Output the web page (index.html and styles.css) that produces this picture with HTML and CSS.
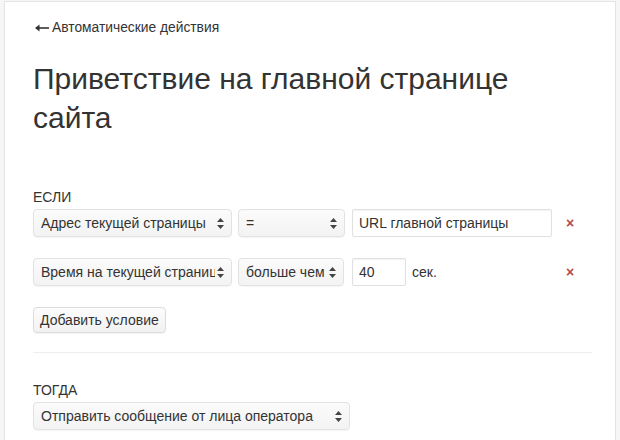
FILE: index.html
```html
<!DOCTYPE html>
<html lang="ru">
<head>
    <meta charset="UTF-8">
    <title>Приветствие на главной странице сайта</title>
    <link rel="stylesheet" href="styles.css">
</head>
<body>
    <div class="panel">
        <a class="back" href="#">
            <svg class="back-arrow" width="14" height="8" viewBox="0 0 14 8"><path d="M1 4H14" stroke="#333" stroke-width="1.6"/><path d="M0 4L4.5 0.5V7.5z" fill="#333"/></svg>
            Автоматические действия
        </a>
        <h1>Приветствие на главной странице сайта</h1>

        <div class="label">ЕСЛИ</div>

        <div class="cond">
            <div class="select-wrap w-field">
                <select><option>Адрес текущей страницы</option></select>
                <svg class="arrows" width="7" height="11" viewBox="0 0 7 11"><path d="M3.5 0L7 4H0z M3.5 11L0 7h7z" fill="#444"/></svg>
            </div>
            <div class="select-wrap w-op">
                <select><option>=</option></select>
                <svg class="arrows" width="7" height="11" viewBox="0 0 7 11"><path d="M3.5 0L7 4H0z M3.5 11L0 7h7z" fill="#444"/></svg>
            </div>
            <input class="text w-value" type="text" value="URL главной страницы">
            <span class="remove">&times;</span>
        </div>

        <div class="cond">
            <div class="select-wrap w-field">
                <select><option>Время на текущей странице</option></select>
                <svg class="arrows" width="7" height="11" viewBox="0 0 7 11"><path d="M3.5 0L7 4H0z M3.5 11L0 7h7z" fill="#444"/></svg>
            </div>
            <div class="select-wrap w-op2">
                <select><option>больше чем</option></select>
                <svg class="arrows" width="7" height="11" viewBox="0 0 7 11"><path d="M3.5 0L7 4H0z M3.5 11L0 7h7z" fill="#444"/></svg>
            </div>
            <input class="text w-num" type="text" value="40">
            <span class="unit">сек.</span>
            <span class="remove">&times;</span>
        </div>

        <button class="btn">Добавить условие</button>

        <hr>

        <div class="label then">ТОГДА</div>
        <div class="select-wrap w-action">
            <select><option>Отправить сообщение от лица оператора</option></select>
            <svg class="arrows" width="7" height="11" viewBox="0 0 7 11"><path d="M3.5 0L7 4H0z M3.5 11L0 7h7z" fill="#444"/></svg>
        </div>
    </div>
</body>
</html>
```

FILE: styles.css
```css
* {
    margin: 0;
    padding: 0;
    box-sizing: border-box;
}

body {
    font-family: "Liberation Sans", Arial, sans-serif;
    background-color: #f6f6f6;
    color: #333;
    font-size: 14px;
}

.panel {
    margin: 1px 4px 0 4px;
    min-height: 460px;
    padding: 17px 28px 0 28px;
    background-color: #fff;
    border: 1px solid #e4e4e4;
}

.back {
    display: flex;
    align-items: center;
    gap: 3px;
    line-height: 18px;
    font-size: 13.8px;
    color: #333;
    text-decoration: none;
}

.back-arrow {
    margin-left: 2px;
}

h1 {
    margin-top: 22px;
    width: 520px;
    font-size: 30px;
    line-height: 39px;
    font-weight: normal;
    color: #333;
}

.label {
    margin-top: 51px;
    margin-bottom: 3px;
    line-height: 18px;
}

.label.then {
    margin-top: 28px;
}

.cond {
    display: flex;
    align-items: center;
    gap: 6px;
    width: 545px;
    margin-bottom: 21px;
}

.select-wrap {
    position: relative;
    height: 28px;
}

.select-wrap select {
    appearance: none;
    -webkit-appearance: none;
    width: 100%;
    height: 100%;
    padding: 0 16px 0 7px;
    font-family: inherit;
    font-size: 14px;
    color: #333;
    background: linear-gradient(#fbfbfb, #f3f3f3);
    border: 1px solid #e2e2e2;
    border-radius: 4px;
    box-shadow: 0 1px 1px rgba(0, 0, 0, 0.04);
}

.arrows {
    position: absolute;
    right: 8px;
    top: 9px;
    pointer-events: none;
}

.w-field { width: 199px; }
.w-op { width: 107px; }
.w-op2 { width: 106px; margin-right: 1px; }
.w-op2 select { padding-right: 12px; }
.w-action { width: 317px; }

.text {
    height: 28px;
    padding: 0 6px;
    margin-left: 1px;
    font-family: inherit;
    font-size: 14px;
    color: #333;
    border: 1px solid #e0e0e0;
    border-radius: 2px;
    box-shadow: inset 0 1px 1px rgba(0, 0, 0, 0.05);
}

.w-value { width: 200px; }
.w-num { width: 54px; }

.remove {
    margin-left: auto;
    width: 16px;
    text-align: center;
    color: #b44a4a;
    font-size: 14px;
    font-weight: bold;
}

.btn {
    height: 26px;
    padding: 0 6px;
    font-family: inherit;
    font-size: 14px;
    color: #333;
    background: linear-gradient(#fcfcfc, #f2f2f2);
    border: 1px solid #dcdcdc;
    border-radius: 4px;
    box-shadow: 0 1px 1px rgba(0, 0, 0, 0.05);
}

hr {
    margin-top: 19px;
    width: 559px;
    border: none;
    border-top: 1px solid #eee;
}
```
